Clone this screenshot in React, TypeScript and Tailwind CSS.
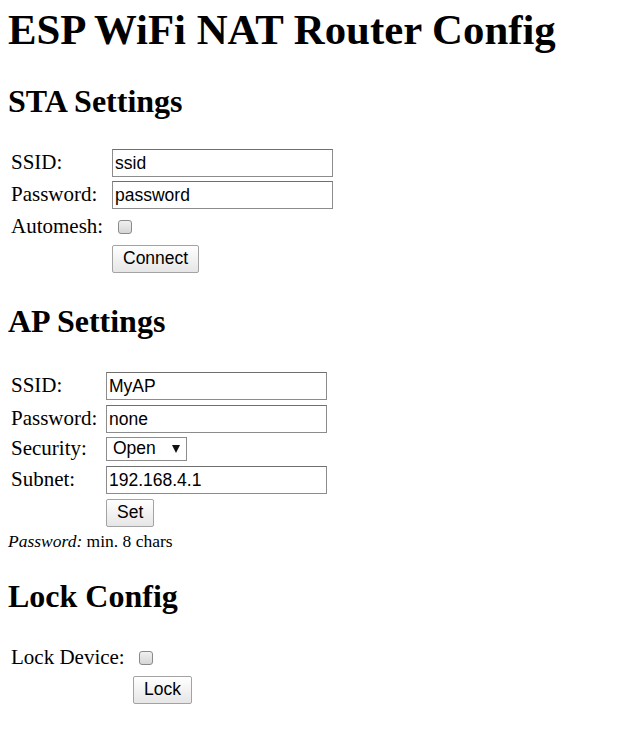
import React from 'react';

const serif = "font-['Liberation_Serif','Times_New_Roman',serif]";
const sans = "font-['Liberation_Sans',Arial,sans-serif]";

const TextBox = ({ value }: { value: string }) => (
  <input
    type="text"
    defaultValue={value}
    className={`${sans} h-[28px] w-[221px] border border-[#8c8c8c] border-t-[#6f6f6f] bg-white pl-[2px] text-[17.5px] text-black outline-none`}
  />
);

const Button = ({ label }: { label: string }) => (
  <button
    className={`${sans} h-[28px] rounded-[2px] border border-[#a3a3a3] bg-gradient-to-b from-white to-[#e6e6e6] px-[10px] text-[17.5px] leading-none text-black`}
  >
    {label}
  </button>
);

const Check = () => (
  <input
    type="checkbox"
    className="ml-[6px] h-[14px] w-[14px] appearance-none rounded-[3px] border border-[#8a8a8a] bg-gradient-to-b from-[#f0f0f0] to-[#d6d6d6]"
  />
);

// drop-down drawn as a box, the native select text sits too low
const Select = ({ value }: { value: string }) => (
  <div
    role="combobox"
    className={`${sans} flex h-[24px] w-[81px] items-center justify-between border border-[#8c8c8c] bg-white pl-[6px] pr-[6px] text-[17.5px] leading-none text-black`}
  >
    <span>{value}</span>
    <svg width="8" height="8" viewBox="0 0 8 8">
      <polygon points="0,0 8,0 4,8" fill="#111" />
    </svg>
  </div>
);

export default function App() {
  return (
    <div className={`${serif} min-h-screen bg-white pl-2 pt-[6px] text-black`}>
      <h1 className="h-[48px] text-[42.8px] font-bold leading-[48px]">ESP WiFi NAT Router Config</h1>

      {/* STA */}
      <h2 className="mt-[29px] h-[36px] text-[32px] font-bold leading-[36px]">STA Settings</h2>
      <div className="mt-[30px] flex flex-col gap-[4px] pl-[3px] text-[21px]">
        <div className="flex h-[28px] items-center">
          <span className="w-[101px]">SSID:</span>
          <TextBox value="ssid" />
        </div>
        <div className="flex h-[28px] items-center">
          <span className="w-[101px]">Password:</span>
          <TextBox value="password" />
        </div>
        <div className="flex h-[28px] items-center">
          <span className="w-[101px]">Automesh:</span>
          <Check />
        </div>
        <div className="flex h-[28px] items-center">
          <span className="w-[101px]" />
          <Button label="Connect" />
        </div>
      </div>

      {/* AP */}
      <h2 className="mt-[30px] h-[36px] text-[32px] font-bold leading-[36px]">AP Settings</h2>
      <div className="flex flex-col pl-[3px] text-[21px]">
        <div className="mt-[33px] flex h-[28px] items-center">
          <span className="w-[95px]">SSID:</span>
          <TextBox value="MyAP" />
        </div>
        <div className="mt-[5px] flex h-[28px] items-center">
          <span className="w-[95px]">Password:</span>
          <TextBox value="none" />
        </div>
        <div className="mt-[4px] flex h-[24px] items-center">
          <span className="w-[95px]">Security:</span>
          <Select value="Open" />
        </div>
        <div className="mt-[5px] flex h-[28px] items-center">
          <span className="w-[95px]">Subnet:</span>
          <TextBox value="192.168.4.1" />
        </div>
        <div className="mt-[5px] flex h-[28px] items-center">
          <span className="w-[95px]" />
          <Button label="Set" />
        </div>
      </div>
      <p className="mt-[4px] h-[20px] text-[17.5px] leading-[20px]">
        <i>Password:</i> min. 8 chars
      </p>

      {/* Lock */}
      <h2 className="mt-[27px] h-[36px] text-[32px] font-bold leading-[36px]">Lock Config</h2>
      <div className="flex flex-col pl-[3px] text-[21px]">
        <div className="mt-[30px] flex h-[27px] items-center">
          <span className="w-[122px]">Lock Device:</span>
          <Check />
        </div>
        <div className="mt-[5px] flex h-[27px] items-center">
          <span className="w-[122px]" />
          <Button label="Lock" />
        </div>
      </div>
    </div>
  );
}
